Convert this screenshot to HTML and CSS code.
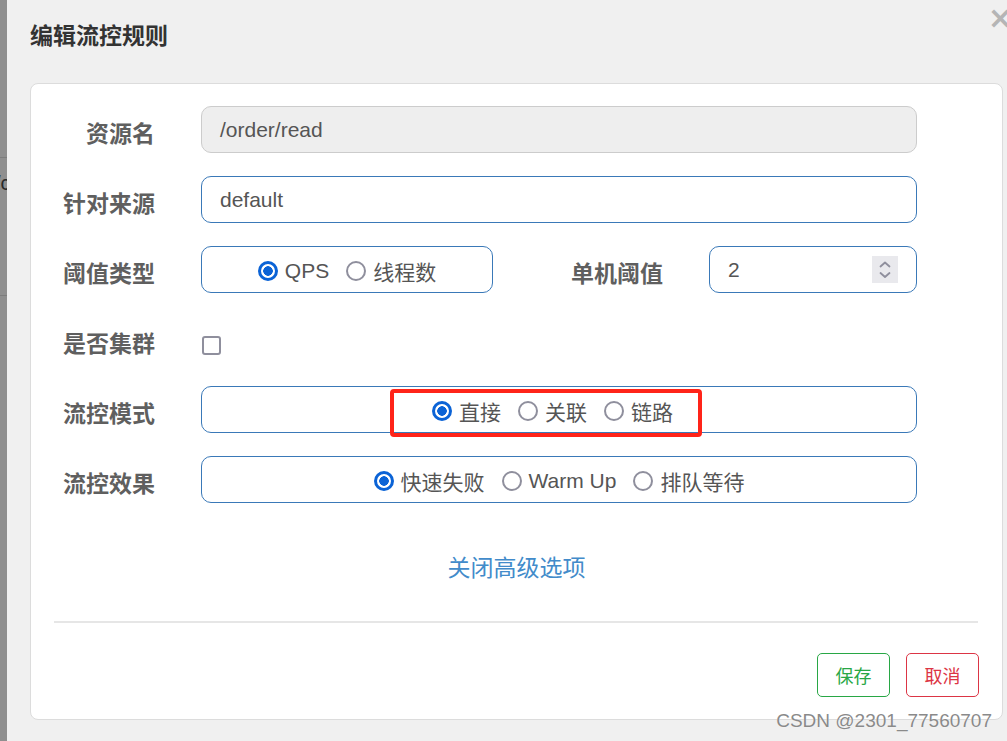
FILE: index.html
```html
<!DOCTYPE html>
<html lang="zh-CN">
<head>
<meta charset="utf-8">
<title>编辑流控规则</title>
<link rel="stylesheet" href="styles.css">
</head>
<body>
<div class="page">
  <div class="backdrop">
    <div class="bd-top"></div>
    <div class="bd-row"><span class="bd-text">/c</span></div>
    <div class="bd-rest"></div>
  </div>
  <div class="dialog">
    <div class="dialog-head">
      <h1 class="title">编辑流控规则</h1>
      <span class="close">×</span>
    </div>
    <div class="panel">
      <div class="row">
        <label class="label">资源名</label>
        <div class="field field-disabled wide">/order/read</div>
      </div>
      <div class="row">
        <label class="label">针对来源</label>
        <div class="field wide">default</div>
      </div>
      <div class="row">
        <label class="label">阈值类型</label>
        <div class="field radios narrow">
          <span class="radio checked"></span><span class="rtext">QPS</span>
          <span class="radio"></span><span class="rtext">线程数</span>
        </div>
        <label class="label label2">单机阈值</label>
        <div class="field number">
          <span class="num">2</span>
          <span class="spin">
            <svg width="26" height="27" viewBox="0 0 26 27"><path d="M8.5 10.5 L13 6.5 L17.5 10.5" fill="none" stroke="#8f8f9d" stroke-width="1.8" stroke-linecap="round" stroke-linejoin="round"/><path d="M8.5 17 L13 21 L17.5 17" fill="none" stroke="#8f8f9d" stroke-width="1.8" stroke-linecap="round" stroke-linejoin="round"/></svg>
          </span>
        </div>
      </div>
      <div class="row">
        <label class="label">是否集群</label>
        <span class="checkbox"></span>
      </div>
      <div class="row">
        <label class="label">流控模式</label>
        <div class="field radios wide mode">
          <span class="radio checked"></span><span class="rtext">直接</span>
          <span class="radio"></span><span class="rtext">关联</span>
          <span class="radio"></span><span class="rtext">链路</span>
          <span class="highlight"></span>
        </div>
      </div>
      <div class="row">
        <label class="label">流控效果</label>
        <div class="field radios wide">
          <span class="radio checked"></span><span class="rtext">快速失败</span>
          <span class="radio"></span><span class="rtext">Warm Up</span>
          <span class="radio"></span><span class="rtext">排队等待</span>
        </div>
      </div>
      <div class="advanced"><a class="link">关闭高级选项</a></div>
      <div class="divider"></div>
      <div class="actions">
        <button class="btn btn-save">保存</button>
        <button class="btn btn-cancel">取消</button>
      </div>
    </div>
  </div>
  <div class="watermark">CSDN @2301_77560707</div>
</div>
</body>
</html>
```

FILE: styles.css
```css
* { box-sizing: border-box; }
html, body { margin: 0; padding: 0; }
body {
  width: 1007px;
  height: 741px;
  overflow: hidden;
  background: #f0f0f0;
  font-family: "Liberation Sans", "Noto Sans CJK SC", sans-serif;
}
.page {
  position: relative;
  display: flex;
  width: 1007px;
  height: 741px;
}
.backdrop {
  width: 7px;
  flex: none;
  display: flex;
  flex-direction: column;
  background: #8f8f8f;
}
.bd-top { height: 158px; border-bottom: 1px solid #7d7d7d; background: #8f8f8f; }
.bd-row {
  height: 138px;
  border-bottom: 1px solid #7d7d7d;
  overflow: hidden;
  position: relative;
}
.bd-text {
  display: block;
  margin-top: 14px;
  margin-left: -5px;
  font-size: 20px;
  color: #2a2a2a;
}
.bd-rest { flex: 1; }
.dialog {
  flex: 1;
  padding-left: 23px;
  padding-right: 4px;
}
.dialog-head {
  position: relative;
  height: 83px;
  padding-top: 20px;
}
.title {
  margin: 0;
  font-size: 23px;
  line-height: 28px;
  font-weight: bold;
  color: #333;
  font-family: "Noto Sans CJK SC", sans-serif;
}
.close {
  position: absolute;
  right: -10px;
  top: 3px;
  font-size: 30px;
  line-height: 30px;
  color: #b5b5b5;
  font-weight: bold;
  font-family: "DejaVu Sans", sans-serif;
}
.panel {
  height: 637px;
  background: #fff;
  border: 1px solid #dcdcdc;
  border-radius: 8px;
  padding: 22px 23px 0 23px;
}
.row {
  display: flex;
  align-items: center;
  height: 47px;
  margin-bottom: 23px;
}
.label {
  width: 101px;
  margin-right: 46px;
  text-align: right;
  font-family: "Noto Sans CJK SC", sans-serif;
  font-size: 23px;
  font-weight: bold;
  color: #5f5f5f;
  padding-top: 4px;
  white-space: nowrap;
}
.label2 {
  width: auto;
  margin-left: 78px;
  margin-right: 46px;
}
.field {
  height: 47px;
  border: 1px solid #3a79b8;
  border-radius: 10px;
  display: flex;
  align-items: center;
  padding-left: 18px;
  font-size: 21px;
  color: #555;
}
.wide { width: 716px; }
.narrow { width: 292px; }
.field-disabled {
  background: #eeeeee;
  border-color: #cccccc;
}
.radios {
  justify-content: center;
  padding-left: 0;
  position: relative;
}
.radio {
  width: 20px;
  height: 20px;
  border-radius: 50%;
  border: 2.5px solid #8f8f9d;
  flex: none;
  margin-right: 7px;
  margin-top: 2px;
  background: #fff;
}
.radio.checked {
  border: 3px solid #0b63d6;
  background: radial-gradient(circle, #0b63d6 0 4.5px, #fff 5px);
}
.rtext {
  margin-right: 17px;
  font-family: "Liberation Sans", "Noto Sans CJK SC", sans-serif;
  color: #555;
  padding-top: 2px;
}
.rtext:last-of-type { margin-right: 0; }
.mode { padding-left: 4px; }
.highlight {
  position: absolute;
  left: 188px;
  top: 2px;
  width: 312px;
  height: 48px;
  border: 4px solid #ff2419;
  border-radius: 4px;
}
.number {
  width: 208px;
  justify-content: space-between;
  padding-right: 18px;
}
.num { color: #555; }
.spin {
  width: 26px;
  height: 27px;
  background: #e9e9ed;
  display: block;
}
.spin svg { display: block; }
.checkbox {
  width: 19px;
  height: 19px;
  border: 2.5px solid #8f8f9d;
  border-radius: 3px;
  margin-left: 1px;
  margin-top: 11px;
}
.advanced {
  text-align: center;
  margin-top: 48px;
  height: 30px;
}
.link {
  font-family: "Noto Sans CJK SC", sans-serif;
  font-size: 23px;
  line-height: 30px;
  color: #428bca;
  cursor: pointer;
}
.divider {
  margin-top: 40px;
  margin-right: 1px;
  height: 2px;
  background: #e6e6e6;
}
.actions {
  display: flex;
  justify-content: flex-end;
  gap: 16px;
  margin-top: 30px;
}
.btn {
  width: 73px;
  height: 44px;
  background: #fff;
  border: 1px solid;
  border-radius: 5px;
  font-family: "Noto Sans CJK SC", sans-serif;
  font-size: 18px;
  padding: 0;
}
.btn-save { border-color: #28a745; color: #28a745; }
.btn-cancel { border-color: #dc3545; color: #dc3545; }
.watermark {
  position: absolute;
  right: 15px;
  top: 709px;
  font-size: 19px;
  line-height: 24px;
  color: #8a8a8a;
  font-family: "Liberation Sans", sans-serif;
  text-shadow: 0 0 1px #fff;
}
```
